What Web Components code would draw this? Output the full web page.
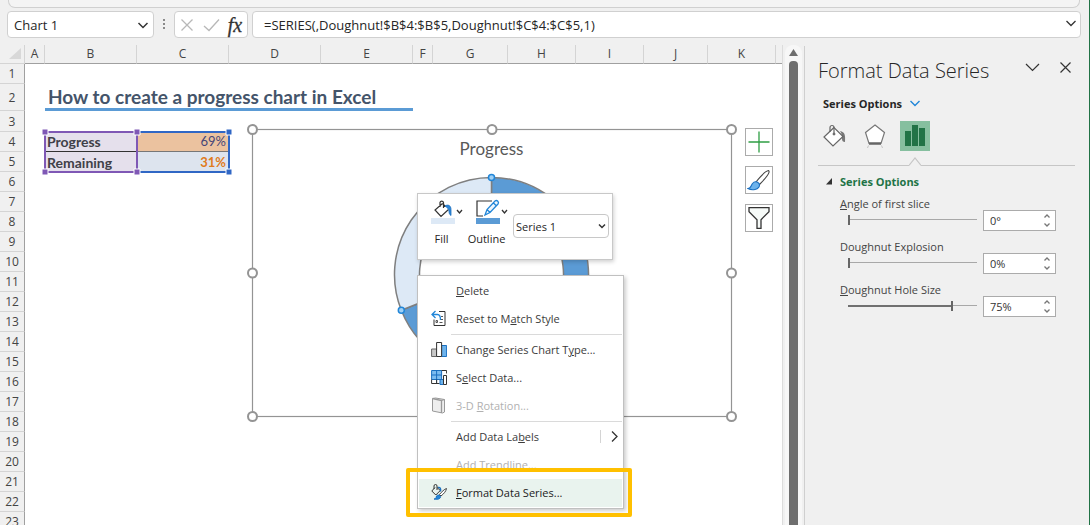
<!DOCTYPE html>
<html lang="en">
<head>
<meta charset="utf-8">
<meta name="viewport" content="width=device-width, initial-scale=1">
<title>Format Data Series</title>
<style>
    body {
        margin: 0;
        font-family: "Open Sans", "Noto Sans", sans-serif;
        font-size: 11px;
        color: #333;
        --chrome: #f0f0f0;
        --line: #d0d0d0;
        --series: #5b9bd5;
        --series-light: #dde9f6;
        --green: #217346;
        --calc-font: Lato, "Open Sans", sans-serif;
    }
</style>
</head>
<body>
<app-window>
    <formula-bar slot="formula" name="Chart 1" formula="=SERIES(,Doughnut!$B$4:$B$5,Doughnut!$C$4:$C$5,1)"></formula-bar>
    <work-sheet slot="sheet">
        <chart-object heading="Progress" value="69"></chart-object>
        <mini-toolbar></mini-toolbar>
        <context-menu>
            <menu-item><u>D</u>elete</menu-item>
            <menu-item icon="reset">Reset to M<u>a</u>tch Style</menu-item>
            <hr>
            <menu-item icon="chart">Change Series Chart T<u>y</u>pe...</menu-item>
            <menu-item icon="data">S<u>e</u>lect Data...</menu-item>
            <menu-item icon="rotate" disabled>3-D <u>R</u>otation...</menu-item>
            <hr>
            <menu-item submenu>Add Data La<u>b</u>els</menu-item>
            <menu-item disabled>Add Trendline...</menu-item>
            <menu-item icon="format" active><u>F</u>ormat Data Series...</menu-item>
        </context-menu>
    </work-sheet>
    <scroll-track slot="scroll"></scroll-track>
    <format-pane slot="pane">
        <range-field min="0" max="360" value="0" unit="°"><u>A</u>ngle of first slice</range-field>
        <range-field min="0" max="400" value="0" unit="%">Doughnut Explosion</range-field>
        <range-field min="10" max="90" value="75" unit="%"><u>D</u>oughnut Hole Size</range-field>
    </format-pane>
</app-window>

<script>
class AppWindow extends HTMLElement {
    constructor() {
        super();
        this.attachShadow({ mode: 'open' });
        this.shadowRoot.innerHTML = `
            <style>
                :host {
                    display: flex;
                    flex-direction: column;
                    height: 100vh;
                    box-sizing: border-box;
                    border-right: 1px solid var(--green);
                    background: var(--chrome);
                    overflow: hidden;
                }

                .ribbon {
                    height: 8px;
                    flex: none;
                    margin: 0 9px 0 8px;
                    border: 1px solid var(--line);
                    border-top: 0;
                    border-radius: 0 0 7px 7px;
                    box-sizing: border-box;
                    background: #f4f4f4;
                }

                main {
                    flex: 1;
                    min-height: 0;
                    display: flex;
                }

                slot[name="sheet"]::slotted(*) {
                    flex: 1;
                    min-width: 0;
                }
            </style>
            <div class="ribbon"></div>
            <slot name="formula"></slot>
            <main>
                <slot name="sheet"></slot>
                <slot name="scroll"></slot>
                <slot name="pane"></slot>
            </main>
        `;
    }
}

class FormulaBar extends HTMLElement {
    constructor() {
        super();
        this.attachShadow({ mode: 'open' });
        this.shadowRoot.innerHTML = `
            <style>
                :host {
                    display: flex;
                    flex: none;
                    height: 27px;
                    padding: 3px 8px 7px 7px;
                }

                .box {
                    display: flex;
                    align-items: center;
                    box-sizing: border-box;
                    background: #fff;
                    border: 1px solid var(--line);
                    border-radius: 4px;
                }

                .name { width: 147px; }
                .tools { width: 74px; margin-right: 4px; }
                .formula { flex: 1; }

                input {
                    flex: 1;
                    min-width: 0;
                    border: 0;
                    outline: 0;
                    background: none;
                    font: inherit;
                    font-size: 13px;
                    color: #262626;
                    padding: 0 0 0 6px;
                }

                .formula input { padding-left: 11px; }

                button {
                    display: flex;
                    border: 0;
                    background: none;
                    padding: 0 4px;
                }

                .tools button {
                    flex: 1;
                    justify-content: center;
                    padding: 0;
                }

                .tools .fx {
                    font: italic 20px/20px "Liberation Serif", serif;
                    -webkit-text-stroke: 0.3px #333;
                    color: #333;
                }

                svg { fill: none; stroke: #333; }

                .dots {
                    width: 20px;
                    stroke: none;
                    fill: #8a8a8a;
                }
            </style>
            <div class="box name">
                <input aria-label="Name box">
                <button aria-label="Names"><svg width="12" height="12"><path d="M1.500 4l4.500 4.500l4.500-4.500" stroke-width="1.500"/></svg></button>
            </div>
            <svg class="dots" height="26"><path d="M9 8h2v2h-2zM9 12h2v2h-2zM9 16h2v2h-2z"/></svg>
            <div class="box tools">
                <button aria-label="Cancel"><svg width="14" height="14"><path d="M1.500 1.500l11 11m0-11l-11 11" stroke="#b8b8b8" stroke-width="1.300"/></svg></button>
                <button aria-label="Enter"><svg width="17" height="14"><path d="M1 8l5 4.500L16 1.500" stroke="#b8b8b8" stroke-width="1.300"/></svg></button>
                <button class="fx" aria-label="Insert function">fx</button>
            </div>
            <div class="box formula">
                <input aria-label="Formula">
                <button aria-label="Expand"><svg width="10" height="14"><path d="M.500 3l4.500 4.500l4.500-4.500" stroke-width="1.300"/></svg></button>
            </div>
        `;
    }

    connectedCallback() {
        this.shadowRoot.querySelector('.name input').value = this.getAttribute('name');
        this.shadowRoot.querySelector('.formula input').value = this.getAttribute('formula');
    }
}

const COLUMNS = { A: 20, B: 92, C: 92, D: 92, E: 92, F: 20, G: 75, H: 68, I: 68, J: 64, K: 68 };
const ROW_COUNT = 23;

const CELLS = {
    2: '<td></td><td class="title" colspan="4">How to create a progress chart in Excel</td><td colspan="7"></td>',
    4: '<td></td><td class="label first">Progress</td><td class="value done">69%</td><td colspan="9"></td>',
    5: '<td></td><td class="label">Remaining</td><td class="value left">31%</td><td colspan="9"></td>'
};

class WorkSheet extends HTMLElement {
    constructor() {
        super();
        this.attachShadow({ mode: 'open' });
        const cols = Object.values(COLUMNS).map(w => `<col style="width: ${w}px">`).join('');
        const heads = Object.keys(COLUMNS).map(c => `<th scope="col">${c}</th>`).join('');
        let rows = '';
        for (let r = 1; r <= ROW_COUNT; r++) {
            rows += `<tr class="r${r}"><th scope="row">${r}</th>${CELLS[r] || '<td colspan="12"></td>'}</tr>`;
        }
        this.shadowRoot.innerHTML = `
            <style>
                :host {
                    display: block;
                    position: relative;
                    overflow: hidden;
                    border-right: 1px solid #dcdcdc;
                }

                table {
                    table-layout: fixed;
                    width: 100%;
                    border-spacing: 0;
                    background: #fff;
                }

                th, td {
                    box-sizing: border-box;
                    padding: 0;
                    white-space: nowrap;
                }

                th {
                    background: var(--chrome);
                    font-size: 12px;
                    font-weight: 400;
                    color: #444;
                }

                thead th {
                    height: 19px;
                    line-height: 18px;
                    border-bottom: 1px solid #a0a0a0;
                    border-right: 1px solid #d4d4d4;
                }

                thead th:last-child { border-right: 0; }

                thead th:first-child { border-bottom-color: #d4d4d4; }

                thead svg {
                    display: block;
                    margin: 3px 0 3px 9px;
                    fill: #d8d8d8;
                }

                tbody th {
                    height: 20px;
                    padding-top: 1px;
                    line-height: 18px;
                    border-right: 1px solid #a0a0a0;
                    border-bottom: 1px solid #d4d4d4;
                }

                .r2 th { height: 27px; padding-top: 2px; }
                .r3 th { height: 21px; }

                td { font-family: var(--calc-font); }

                .title {
                    font-size: 19px;
                    line-height: 22px;
                    font-weight: 700;
                    color: #44546a;
                    padding: 2px 0 0 3px;
                    border-bottom: 3px solid var(--series);
                }

                .label, .value {
                    font-size: 14px;
                    line-height: 19px;
                }

                .label {
                    font-weight: 700;
                    color: #404048;
                    background: #e5e0ec;
                    padding-left: 2px;
                }

                .value {
                    font-size: 13px;
                    text-align: right;
                    padding-right: 3px;
                }

                .first { border-bottom: 1px solid #333; }

                .done {
                    color: #454578;
                    background: #ebc29f;
                    border-bottom: 1px solid #777;
                }

                .left {
                    font-weight: 700;
                    color: #e07b1c;
                    background: #dde4ee;
                }

                .canvas {
                    position: absolute;
                    left: 25px;
                    top: 19px;
                }

                .range {
                    position: absolute;
                    overflow: visible;
                    left: 19px;
                    top: 67px;
                    fill: none;
                    stroke-width: 2;
                }
            </style>
            <table>
                <colgroup><col style="width: 25px">${cols}<col></colgroup>
                <thead><tr><th><svg width="12" height="12"><path d="M12 0v11H0z"/></svg></th>${heads}<th></th></tr></thead>
                <tbody>${rows}</tbody>
            </table>
            <div class="canvas">
                <svg class="range" width="186" height="42">
                    <path d="M94 1h91v40h-91" stroke="#3067c5"/>
                    <path d="M1 1h92v40h-92z" stroke="#7f58b5"/>
                    <g stroke="#fff">
                        <path d="M-2 -2h6v6h-6zM90 -2h6v6h-6zM-2 38h6v6h-6zM90 38h6v6h-6z" fill="#7f58b5" stroke-width="1"/>
                        <path d="M182 -2h6v6h-6zM182 38h6v6h-6z" fill="#3067c5" stroke-width="1"/>
                    </g>
                </svg>
                <slot></slot>
            </div>
        `;
    }
}

class ScrollTrack extends HTMLElement {
    constructor() {
        super();
        this.attachShadow({ mode: 'open' });
        this.shadowRoot.innerHTML = `
            <style>
                :host {
                    display: flex;
                    flex-direction: column;
                    align-items: center;
                    flex: none;
                    width: 17px;
                    margin: 0 2px;
                    background: #f7f7f7;
                    border-radius: 8px 8px 0 0;
                }

                svg { margin: 4px 0 5px; }

                .thumb {
                    flex: 1;
                    width: 9px;
                    background: #6e6e6e;
                    border-radius: 4px 4px 0 0;
                }
            </style>
            <svg width="9" height="7"><path d="M4.500 0L9 7H0z" fill="#6e6e6e"/></svg>
            <div class="thumb"></div>
        `;
    }
}

const SLICE_SIZE = 97;
const HOLE_SIZE = 72;
const FRAME = { width: 479, height: 287 };

function ringPoint(radius, percent) {
    const a = percent / 100 * Math.PI * 2;
    return [radius * Math.sin(a), -radius * Math.cos(a)].map(n => n.toFixed(2));
}

function ringSlice(from, to) {
    const large = to - from > 50 ? 1 : 0;
    return `M${ringPoint(SLICE_SIZE, from)} A${SLICE_SIZE} ${SLICE_SIZE} 0 ${large} 1 ${ringPoint(SLICE_SIZE, to)}
        L${ringPoint(HOLE_SIZE, to)} A${HOLE_SIZE} ${HOLE_SIZE} 0 ${large} 0 ${ringPoint(HOLE_SIZE, from)} Z`;
}

class ChartObject extends HTMLElement {
    constructor() {
        super();
        this.attachShadow({ mode: 'open' });
    }

    connectedCallback() {
        const value = Number(this.getAttribute('value'));
        const [px, py] = ringPoint(SLICE_SIZE, value);
        const grips = [0, 1, 2].flatMap(x => [0, 1, 2].map(y => [x, y]))
            .filter(([x, y]) => x !== 1 || y !== 1)
            .map(([x, y]) => `<circle cx="${x * FRAME.width / 2}" cy="${y * FRAME.height / 2}" r="4.500"/>`).join('');
        this.shadowRoot.innerHTML = `
            <style>
                :host {
                    position: absolute;
                    left: 227px;
                    top: 64px;
                    display: flex;
                    gap: 14px;
                }

                .frame {
                    position: relative;
                    width: ${FRAME.width}px;
                    height: ${FRAME.height}px;
                    background: #fff;
                }

                h2 {
                    margin: 0;
                    padding-top: 9px;
                    text-align: center;
                    font: 400 17px/24px var(--calc-font);
                    color: #595959;
                }

                .art {
                    position: absolute;
                    inset: 0;
                    overflow: visible;
                }

                .tools {
                    display: flex;
                    flex-direction: column;
                    gap: 10px;
                }

                button {
                    display: flex;
                    width: 28px;
                    height: 28px;
                    box-sizing: border-box;
                    padding: 0;
                    align-items: center;
                    justify-content: center;
                    background: #fff;
                    border: 1px solid #ababab;
                }
            </style>
            <div class="frame">
                <h2></h2>
                <svg class="art" width="${FRAME.width}" height="${FRAME.height}">
                    <g transform="translate(239.500 146.500)" stroke="#7f7f7f" stroke-width="1.500">
                        <path d="${ringSlice(0, value)}" fill="#5b9bd5"/>
                        <path d="${ringSlice(value, 100)}" fill="#dde9f6"/>
                        <g fill="#9fd0f5" stroke="#2186d8">
                            <circle cx="0" cy="${-SLICE_SIZE}" r="3"/>
                            <circle cx="${px}" cy="${py}" r="3"/>
                        </g>
                    </g>
                    <g transform="translate(.500 1.500)" stroke="#949494">
                        <rect width="${FRAME.width}" height="${FRAME.height}" fill="none" stroke-width="1.200"/>
                        <g fill="#fff" stroke-width="2">${grips}</g>
                    </g>
                </svg>
            </div>
            <div class="tools">
                <button aria-label="Chart elements"><svg width="22" height="22"><path d="M11 .500v21M.500 11h21" stroke="#2f9e44" stroke-width="1.300"/></svg></button>
                <button aria-label="Chart styles"><svg width="24" height="22" fill="#fff" stroke="#444" stroke-width="1.100"><path d="M9 13C13 8 18 2 21.500 1.500C24 3 18 10 12.500 15.500z"/><path d="M1 19.500c3 0 3-3 4.500-5c2-2.500 5-2 6.500 0c1.500 3-1 5.500-4 6c-3 .500-5 .200-7-1z" fill="#6db3ec" stroke="#1a6fc0"/></svg></button>
                <button aria-label="Chart filters"><svg width="22" height="22"><path d="M1 .700h20v4l-8 8v8.600h-4v-8.600l-8-8z" fill="#f6faf8" stroke="#333" stroke-width="1.300"/></svg></button>
            </div>
        `;
        this.shadowRoot.querySelector('h2').textContent = this.getAttribute('heading');
    }
}

class MiniToolbar extends HTMLElement {
    constructor() {
        super();
        this.attachShadow({ mode: 'open' });
        this.shadowRoot.innerHTML = `
            <style>
                :host {
                    position: absolute;
                    left: 392px;
                    top: 129px;
                    display: flex;
                    box-sizing: border-box;
                    height: 67px;
                    padding: 4px 3px 4px 1px;
                    background: #fff;
                    border: 1px solid #c8c8c8;
                    box-shadow: 1px 2px 4px rgba(0, 0, 0, .18);
                }

                button {
                    display: flex;
                    flex-direction: column;
                    align-items: center;
                    width: 45px;
                    padding: 0;
                    border: 0;
                    background: none;
                    font: inherit;
                    line-height: 16px;
                    color: #262626;
                }

                .row {
                    display: flex;
                    align-items: center;
                    gap: 1px;
                    padding: 1px 0 6px 11px;
                }

                svg { fill: none; }

                .box {
                    position: relative;
                    align-self: flex-start;
                    margin: 16px 0 0 4px;
                }

                select {
                    appearance: none;
                    display: block;
                    width: 96px;
                    height: 24px;
                    padding: 0 18px 0 2px;
                    border: 1px solid #c8c8c8;
                    border-radius: 4px;
                    background: #fff;
                    font: inherit;
                    color: #262626;
                }

                .box svg {
                    position: absolute;
                    right: 3px;
                    top: 9px;
                    pointer-events: none;
                }
            </style>
            <button>
                <span class="row">
                    <svg width="24" height="26">
                        <path d="M11.500 4.500L4 11l6 6.500l7.500-7M11.500 4.500l3 3M9 8V3.500a1.800 1.800 0 0 1 3.500 0V9" stroke="#333" stroke-width="1.200"/>
                        <path d="M14 7c3-2 6-.500 6 3.500v6c-1.500-1-2-2-2-4.500c0-2-2-3.500-4-5z" fill="#2f86d6" stroke="#1a6fc0" stroke-width=".8"/>
                        <path d="M0 19h24v6H0z" fill="#dde9f6"/>
                    </svg>
                    <svg width="7" height="6"><path d="M1 1l2.500 3L6 1" stroke="#333" stroke-width="1.300"/></svg>
                </span>
                Fill
            </button>
            <button>
                <span class="row">
                    <svg width="24" height="26">
                        <path d="M16 2H1v15h6" stroke="#333" stroke-width="1.200"/>
                        <path d="M9 16l2-5.500L19 2c2-1.500 4.500 1 3 3l-8 8.500zM11 10.500l3 3M17.500 4l3 3" fill="#eef6fd" stroke="#2186d8" stroke-width="1.300"/>
                        <path d="M0 19h24v6H0z" fill="#5b9bd5"/>
                    </svg>
                    <svg width="7" height="6"><path d="M1 1l2.500 3L6 1" stroke="#333" stroke-width="1.300"/></svg>
                </span>
                Outline
            </button>
            <div class="box">
                <select aria-label="Chart element"><option>Series 1</option></select>
                <svg width="8" height="7"><path d="M1 1.500l3 3l3-3" stroke="#333" stroke-width="1.500"/></svg>
            </div>
        `;
    }
}

class ContextMenu extends HTMLElement {
    constructor() {
        super();
        this.attachShadow({ mode: 'open' });
        this.shadowRoot.innerHTML = `
            <style>
                :host {
                    position: absolute;
                    left: 392px;
                    top: 211px;
                    width: 207px;
                    box-sizing: border-box;
                    padding: 1px;
                    background: #fff;
                    border: 1px solid #c0c0c0;
                    box-shadow: 2px 2px 4px rgba(0, 0, 0, .2);
                }

                ::slotted(hr) {
                    margin: 1px 0 1px 32px;
                    border: 0;
                    border-top: 1px solid #dadada;
                }

                .callout {
                    position: absolute;
                    left: -12px;
                    right: -9px;
                    bottom: -9px;
                    height: 41px;
                    border: 4px solid #ffc000;
                    border-radius: 2px;
                    pointer-events: none;
                }
            </style>
            <slot></slot>
            <div class="callout"></div>
        `;
    }
}

const MENU_ICONS = {
    reset: `<path d="M8 1.500h6v14H3v-6" stroke="#333"/><path d="M1 4.500h5.500c3 0 3 4 3 5.500M4.500 1L1 4.500L4.500 8" stroke="#2186d8" stroke-width="1.300"/>
        <path d="M5 10.500h1.500v2H5zM8.500 12.500h3M10 6.500h2M10 9.500h2" stroke="#555"/>`,
    chart: `<path d="M.600 8h5v7.500h-5z" fill="#c8c8c8" stroke="#666"/><path d="M10.600 4.500h5v11h-5z" fill="#6db3ec" stroke="#1a6fc0"/><path d="M5.600 1.500h5v14h-5z" fill="#fff" stroke="#333"/>`,
    data: `<path d="M.600 1.500h10v9h-10z" fill="#7cbcf0" stroke="#1a6fc0"/><path d="M.600 6h10M5.600 1.500v13" stroke="#1a6fc0"/><path d="M.600 10.500v4h8M10.600 1.500h5v3M5.600 10.500v4" stroke="#333"/>
        <path d="M9 10.500h3.500v5H9z" fill="#6db3ec" stroke="#1a6fc0"/><path d="M12.500 6.500h3v9h-3z" fill="#fff" stroke="#333"/>`,
    rotate: `<path d="M1.500 1.500l3-.500l9 1.500v12.500l-2 1l-10-2z" fill="#eee" stroke="#999"/><path d="M1.500 1.500L10.500 3.500v12.500M10.500 3.500l3-1" stroke="#999" stroke-width="1.300"/>`,
    format: `<path d="M4 3.500L.800 7l4 4l4.500-4.500L6 3.500M3 5V2a1.500 1.500 0 0 1 3 0v4" stroke="#333"/><path d="M7 3.500c2-.500 3 1 2.500 4" stroke="#1a6fc0" stroke-width="1.500"/>
        <path d="M15.500 4.500c-2 .500-5 3.500-7 6l1.500 1.500c2.500-2 5-4.500 5.500-7.500z" fill="#fff" stroke="#444"/><path d="M3 15c2 0 2-1 2.500-3c1-1.500 3.500-1 4 .500c.500 2-2.500 3.500-6.500 2.500z" fill="#2186d8" stroke="#1a6fc0"/>`
};

class MenuItem extends HTMLElement {
    constructor() {
        super();
        this.attachShadow({ mode: 'open' });
    }

    connectedCallback() {
        const arrow = this.hasAttribute('submenu')
            ? '<svg class="arrow" width="22" height="16"><path d="M1.500 2v13" stroke="#d4d4d4"/><path d="M13 3.500l5 5l-5 5" stroke="#333" stroke-width="1.300"/></svg>'
            : '';
        this.shadowRoot.innerHTML = `
            <style>
                :host { display: block; }

                button {
                    display: flex;
                    align-items: center;
                    width: 100%;
                    height: 28px;
                    padding: 0 1px 2px 12px;
                    border: 0;
                    background: none;
                    font: inherit;
                    color: #3b3b3b;
                    text-align: left;
                    white-space: nowrap;
                }

                button:disabled { color: #b1b1b1; }

                :host([active]) button {
                    background: #e9f3ee;
                    color: #222;
                }

                svg { flex: none; fill: none; }
                .icon { margin-right: 9px; }

                .text { flex: 1; }
            </style>
            <button>
                <svg class="icon" width="16" height="17">${MENU_ICONS[this.getAttribute('icon')] || ''}</svg>
                <span class="text"><slot></slot></span>
                ${arrow}
            </button>
        `;
        this.shadowRoot.querySelector('button').disabled = this.hasAttribute('disabled');
    }
}

class FormatPane extends HTMLElement {
    constructor() {
        super();
        this.attachShadow({ mode: 'open' });
        this.shadowRoot.innerHTML = `
            <style>
                :host {
                    display: block;
                    flex: none;
                    width: 257px;
                    padding: 12px 14px 0 13px;
                    border-left: 1px solid #cfcfcf;
                    margin-top: 1px;
                }

                header {
                    display: flex;
                    align-items: flex-start;
                    gap: 20px;
                    height: 26px;
                    padding-right: 4px;
                }

                h1 {
                    flex: 1;
                    margin: 0;
                    font-size: 20px;
                    line-height: 26px;
                    font-weight: 300;
                    white-space: nowrap;
                    color: #262626;
                }

                button {
                    display: flex;
                    align-items: center;
                    padding: 0;
                    border: 0;
                    background: none;
                    font: inherit;
                    color: #262626;
                }

                header button { height: 18px; }

                svg { flex: none; fill: none; stroke: #333; }

                .options {
                    gap: 8px;
                    margin: 9px 0 8px 5px;
                    height: 20px;
                    font-weight: 700;
                }

                nav {
                    display: flex;
                    gap: 10px;
                    padding-left: 2px;
                }

                nav button {
                    width: 30px;
                    height: 30px;
                    justify-content: center;
                }

                nav button[aria-pressed="true"] { background: #86bf9f; }

                .divider {
                    display: flex;
                    height: 15px;
                    align-items: flex-end;
                }

                .divider i {
                    width: 91px;
                    border-bottom: 1px solid #c6c6c6;
                }

                .divider i:last-child { flex: 1; }

                details { margin-top: 5px; }

                summary {
                    display: flex;
                    align-items: center;
                    gap: 8px;
                    padding-left: 8px;
                    height: 20px;
                    font-weight: 700;
                    color: var(--green);
                    list-style: none;
                }

                .fields {
                    display: grid;
                    gap: 6px;
                    padding: 5px 21px 0 22px;
                }
            </style>
            <header>
                <h1>Format Data Series</h1>
                <button aria-label="Pane options"><svg width="15" height="9"><path d="M1 1l6.500 6.500L14 1" stroke-width="1.200"/></svg></button>
                <button aria-label="Close"><svg width="11" height="11"><path d="M.500 .500l10 10m0-10l-10 10" stroke-width="1.200"/></svg></button>
            </header>
            <button class="options">Series Options <svg width="10" height="7"><path d="M.500 1l4.500 4.500L9.500 1" stroke="#2186d8" stroke-width="1.400"/></svg></button>
            <nav>
                <button aria-label="Fill &amp; line" aria-pressed="false"><svg width="24" height="24">
                    <path d="M17 7c5 1 5.500 4 5 11c-2 0-3-1-3-3c0-3 0-5-2-8z" fill="#777" stroke="none"/>
                    <path d="M11 3.500L1 13l9 9l10-9.500z" fill="#fff" stroke="#666" stroke-width="1.200"/>
                    <path d="M7 8V3.500a2 2 0 0 1 4 0V9" stroke="#666" stroke-width="1.200"/><circle cx="11" cy="10" r="1" fill="#666" stroke="#666"/>
                </svg></button>
                <button aria-label="Effects" aria-pressed="false"><svg width="22" height="24">
                    <path d="M11 1l9.500 7.500L17 19.500H5L1.500 8.500z" fill="#fff" stroke="#777" stroke-width="1.200"/><path d="M5 19.500h12" stroke="#666" stroke-width="2.500"/><path d="M4.500 21.500l-1 2.500M17.500 21.500l1 2.500" stroke="#c4c4c4"/>
                </svg></button>
                <button aria-label="Series options" aria-pressed="true"><svg width="20" height="22">
                    <path d="M0 6h6v15H0zM7 0h6v21H7zM14 3h6v18h-6z" fill="#217346" stroke="none"/>
                </svg></button>
            </nav>
            <div class="divider"><i></i><svg width="12" height="9"><path d="M0 8.500L6 1l6 7.500" stroke="#c6c6c6" stroke-width="1.200"/></svg><i></i></div>
            <details open>
                <summary><svg width="6" height="7"><path d="M6 0v6.500H0z" fill="#333" stroke="none"/></svg>Series Options</summary>
                <div class="fields"><slot></slot></div>
            </details>
        `;
    }
}

class RangeField extends HTMLElement {
    constructor() {
        super();
        this.attachShadow({ mode: 'open' });
        this.shadowRoot.innerHTML = `
            <style>
                :host { display: block; }

                label {
                    display: block;
                    height: 14px;
                    line-height: 16px;
                    color: #444;
                }

                .row {
                    display: flex;
                    gap: 6px;
                    padding-left: 8px;
                    height: 23px;
                }

                [type="range"] {
                    appearance: none;
                    flex: 1;
                    min-width: 0;
                    height: 20px;
                    margin: 0;
                    background: linear-gradient(#707070, #707070) 0 9px / var(--fill) 2px no-repeat,
                        linear-gradient(#a8a8a8, #a8a8a8) 0 9px / 100% 1px no-repeat;
                }

                [type="range"]::-webkit-slider-thumb {
                    appearance: none;
                    width: 2px;
                    height: 10px;
                    background: #666;
                }

                .spin {
                    display: flex;
                    width: 73px;
                    height: 21px;
                    box-sizing: border-box;
                    background: #fff;
                    border: 1px solid #ababab;
                }

                .spin input {
                    flex: 1;
                    min-width: 0;
                    padding: 0 0 0 6px;
                    border: 0;
                    background: none;
                    font: inherit;
                    color: #333;
                }

                .steps {
                    display: flex;
                    flex-direction: column;
                    width: 16px;
                }

                button {
                    flex: 1;
                    display: flex;
                    align-items: center;
                    justify-content: center;
                    padding: 0;
                    border: 0;
                    background: none;
                }

                svg { fill: none; stroke: #777; stroke-width: 1.300; }
            </style>
            <label for="slider"><slot></slot></label>
            <div class="row">
                <input id="slider" type="range">
                <div class="spin">
                    <input type="text" aria-label="Value">
                    <div class="steps">
                        <button aria-label="Increase"><svg width="6" height="4"><path d="M.500 3.500L3 1l2.500 2.500"/></svg></button>
                        <button aria-label="Decrease"><svg width="6" height="4"><path d="M.500 .500L3 3l2.500-2.500"/></svg></button>
                    </div>
                </div>
            </div>
        `;
        this.slider = this.shadowRoot.querySelector('#slider');
        this.slider.addEventListener('input', () => this.update());
        const [up, down] = this.shadowRoot.querySelectorAll('button');
        up.addEventListener('click', () => { this.slider.stepUp(); this.update(); });
        down.addEventListener('click', () => { this.slider.stepDown(); this.update(); });
    }

    connectedCallback() {
        this.slider.min = this.getAttribute('min');
        this.slider.max = this.getAttribute('max');
        this.slider.value = this.getAttribute('value');
        this.update();
    }

    update() {
        const { min, max, value } = this.slider;
        this.slider.style.setProperty('--fill', `${(value - min) / (max - min) * 100}%`);
        this.shadowRoot.querySelector('.spin input').value = value + this.getAttribute('unit');
    }
}

customElements.define('app-window', AppWindow);
customElements.define('formula-bar', FormulaBar);
customElements.define('work-sheet', WorkSheet);
customElements.define('scroll-track', ScrollTrack);
customElements.define('chart-object', ChartObject);
customElements.define('mini-toolbar', MiniToolbar);
customElements.define('context-menu', ContextMenu);
customElements.define('menu-item', MenuItem);
customElements.define('format-pane', FormatPane);
customElements.define('range-field', RangeField);
</script>
</body>
</html>
